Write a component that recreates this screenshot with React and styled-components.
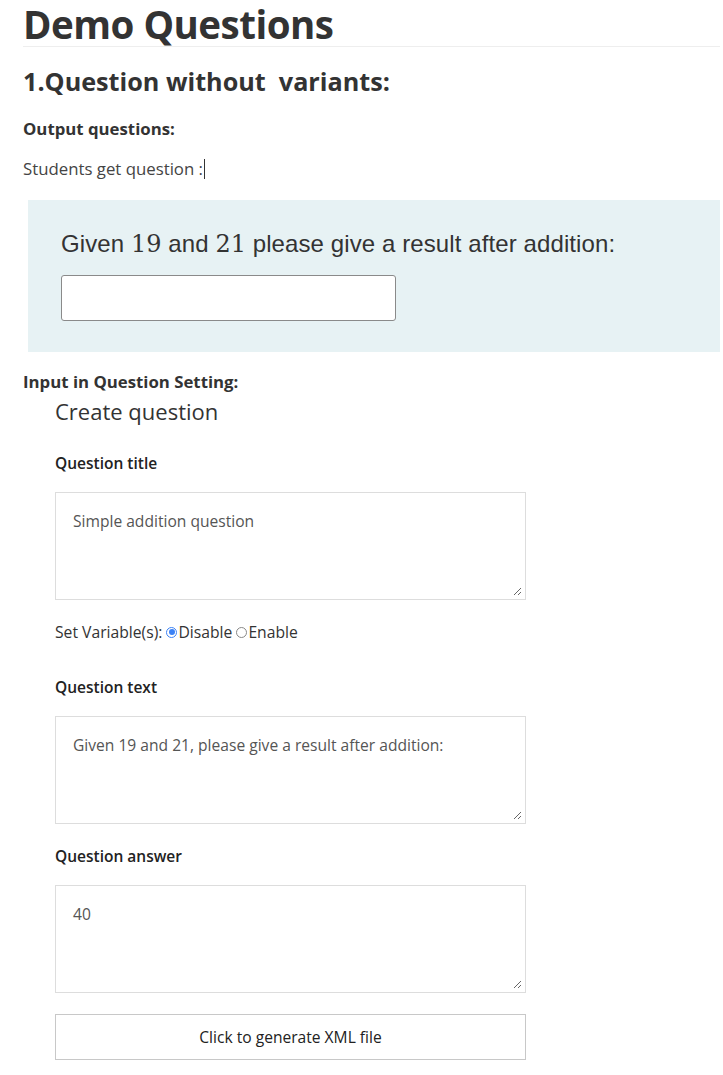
import React from 'react';
import styled, { createGlobalStyle } from 'styled-components';

const GlobalStyle = createGlobalStyle`
  html, body {
    margin: 0;
    padding: 0;
    background: #fff;
  }
  body {
    font-family: "Open Sans", "Noto Sans", sans-serif;
    color: #333;
  }
`;

const Page = styled.div`
  padding: 0 3px 16px 23px;
`;

const Title = styled.h1`
  margin: 0;
  padding: 3px 0 1px;
  font-size: 38.5px;
  line-height: 42px;
  font-weight: 700;
  color: #333;
  letter-spacing: -0.5px;
  border-bottom: 1px solid #eee;
`;

const Section = styled.h2`
  margin: 17px 0 0;
  font-size: 25.2px;
  line-height: 34px;
  font-weight: 700;
  color: #333;
`;

const Label = styled.h4`
  margin: ${p => p.$top || 20}px 0 0;
  font-size: 16.8px;
  line-height: 22px;
  font-weight: 700;
  color: #333;
`;

const Note = styled.p`
  margin: 17px 0 0;
  font-size: 16.8px;
  line-height: 24px;
  color: #444;
`;

const Caret = styled.span`
  display: inline-block;
  width: 1px;
  height: 20px;
  background: #333;
  vertical-align: -4px;
  margin-left: 1px;
`;

const Preview = styled.div`
  margin: 19px 0 0 5px;
  background: #e7f2f4;
  padding: 26px 33px 31px;
`;

const PreviewText = styled.div`
  font-family: "Liberation Sans", Arial, sans-serif;
  font-size: 24px;
  line-height: 36px;
  color: #333;
  letter-spacing: 0.1px;
`;

const MathNum = styled.span`
  font-family: "DejaVu Serif", "Liberation Serif", serif;
  font-size: 24px;
  letter-spacing: 0;
`;

const AnswerBox = styled.div`
  margin-top: 13px;
  width: 335px;
  height: 46px;
  background: #fff;
  border: 1px solid #8a8a8a;
  border-radius: 3px;
  box-sizing: border-box;
`;

const Form = styled.div`
  padding-left: 32px;
  width: 471px;
`;

const FormTitle = styled.div`
  margin-top: 3px;
  font-size: 22px;
  line-height: 30px;
  color: #333;
`;

const FieldLabel = styled.div`
  margin-top: ${p => p.$top || 26}px;
  font-size: 15.5px;
  line-height: 22px;
  font-weight: 600;
  color: #222;
`;

const Area = styled.div`
  position: relative;
  margin-top: 18px;
  height: 108px;
  border: 1px solid #ddd;
  box-sizing: border-box;
  padding: 17px 17px;
  font-size: 15.6px;
  line-height: 22px;
  color: #555;
`;

const Grip = styled.svg`
  position: absolute;
  right: 3px;
  bottom: 3px;
`;

const RadioRow = styled.div`
  margin-top: 21px;
  display: flex;
  align-items: center;
  font-size: 15.7px;
  line-height: 22px;
  color: #333;
`;

const Dot = styled.span`
  display: inline-block;
  box-sizing: border-box;
  width: 11px;
  height: 11px;
  border-radius: 50%;
  border: 1px solid ${p => (p.$on ? '#3b82f6' : '#888')};
  margin: 0 1px 0 4px;
  position: relative;
  &::after {
    content: '';
    display: ${p => (p.$on ? 'block' : 'none')};
    position: absolute;
    left: 1.5px;
    top: 1.5px;
    width: 6px;
    height: 6px;
    border-radius: 50%;
    background: #3b82f6;
  }
`;

const GenButton = styled.button`
  display: block;
  width: 100%;
  margin-top: 21px;
  height: 46px;
  background: #fff;
  border: 1px solid #c8c8c8;
  font-family: "Open Sans", sans-serif;
  font-size: 15.6px;
  color: #222;
  cursor: pointer;
`;

const TextArea = ({ children }) => (
  <Area>
    {children}
    <Grip width="9" height="9" viewBox="0 0 9 9">
      <path d="M8 1 L1 8 M8 5 L5 8" stroke="#666" strokeWidth="1" fill="none" />
    </Grip>
  </Area>
);

const App = () => (
  <Page>
    <GlobalStyle />
    <Title>Demo Questions</Title>
    <Section>1.Question without&nbsp; variants:</Section>
    <Label $top={20}>Output questions:</Label>
    <Note>
      Students get question :<Caret />
    </Note>
    <Preview>
      <PreviewText>
        Given <MathNum>19</MathNum> and <MathNum>21</MathNum> please give a result after addition:
      </PreviewText>
      <AnswerBox />
    </Preview>
    <Label $top={19}>Input in Question Setting:</Label>
    <Form>
      <FormTitle>Create question</FormTitle>
      <FieldLabel $top={26}>Question title</FieldLabel>
      <TextArea>Simple addition question</TextArea>
      <RadioRow>
        Set Variable(s):<Dot $on />Disable<Dot />Enable
      </RadioRow>
      <FieldLabel $top={33}>Question text</FieldLabel>
      <TextArea>Given 19 and 21, please give a result after addition:</TextArea>
      <FieldLabel $top={21}>Question answer</FieldLabel>
      <TextArea>40</TextArea>
      <GenButton>Click to generate XML file</GenButton>
    </Form>
  </Page>
);

export default App;
